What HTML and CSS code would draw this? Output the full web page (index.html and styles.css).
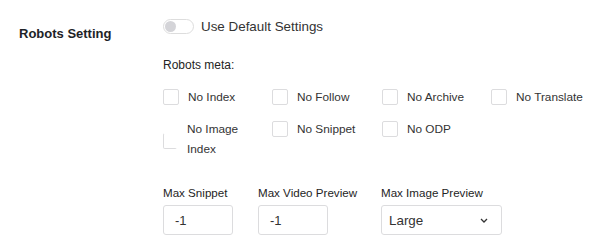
FILE: index.html
```html
<!DOCTYPE html>
<html>
<head>
<meta charset="utf-8">
<link rel="stylesheet" href="styles.css">
</head>
<body>
<div class="setting-row">
  <div class="setting-label">Robots Setting</div>
  <div class="setting-body">
    <div class="toggle-row">
      <span class="toggle"><span class="knob"></span></span>
      <span class="toggle-text">Use Default Settings</span>
    </div>
    <div class="meta-title">Robots meta:</div>
    <div class="check-grid">
      <label class="check"><span class="box"></span><span class="check-text">No Index</span></label>
      <label class="check"><span class="box"></span><span class="check-text">No Follow</span></label>
      <label class="check"><span class="box"></span><span class="check-text">No Archive</span></label>
      <label class="check"><span class="box"></span><span class="check-text">No Translate</span></label>
      <label class="check tall"><span class="box squished"></span><span class="check-text">No Image Index</span></label>
      <label class="check"><span class="box"></span><span class="check-text">No Snippet</span></label>
      <label class="check"><span class="box"></span><span class="check-text">No ODP</span></label>
    </div>
    <div class="fields">
      <div class="field f1">
        <div class="field-label">Max Snippet</div>
        <div class="input small">-1</div>
      </div>
      <div class="field f2">
        <div class="field-label">Max Video Preview</div>
        <div class="input small">-1</div>
      </div>
      <div class="field">
        <div class="field-label">Max Image Preview</div>
        <div class="input select">Large
          <svg class="chev" width="8" height="5" viewBox="0 0 8 5"><path d="M1 1 L4 4 L7 1" fill="none" stroke="#333" stroke-width="1.3"/></svg>
        </div>
      </div>
    </div>
  </div>
</div>
</body>
</html>
```
FILE: styles.css
```css
html, body {
  margin: 0;
  padding: 0;
  background: #fff;
}
body {
  font-family: "Liberation Sans", Arial, sans-serif;
  color: #242424;
}
.setting-row {
  display: flex;
  padding-top: 18px;
}
.setting-label {
  width: 144px;
  padding-left: 19px;
  padding-top: 6px;
  font-size: 13px;
  font-weight: 700;
  color: #1d2327;
  line-height: 20px;
}
.setting-body {
  display: flex;
  flex-direction: column;
}
.toggle-row {
  display: flex;
  align-items: center;
  gap: 7px;
  height: 17px;
}
.toggle {
  width: 27px;
  height: 13px;
  border: 1px solid #ddd;
  border-radius: 8px;
  background: #fff;
  display: flex;
  align-items: center;
  padding: 0 1px;
}
.knob {
  width: 11px;
  height: 11px;
  border-radius: 50%;
  background: #d4d4d8;
}
.toggle-text {
  font-size: 13.4px;
  color: #333;
}
.meta-title {
  margin-top: 22px;
  font-size: 12px;
  line-height: 16px;
  color: #242424;
}
.check-grid {
  margin-top: 14px;
  display: grid;
  grid-template-columns: 109px 110px 109px 109px;
  row-gap: 12px;
  align-items: start;
}
.check {
  display: flex;
  align-items: center;
  gap: 9px;
  font-size: 11.8px;
  line-height: 20px;
  color: #333;
}
.check .check-text {
  max-width: 78px;
}
.check:nth-child(4) .check-text {
  max-width: none;
  white-space: nowrap;
}
.box {
  flex: none;
  width: 14px;
  height: 14px;
  border: 1px solid #dcdcde;
  border-radius: 2px;
  background: #fff;
}
.box.squished {
  width: 12px;
  border-top-color: transparent;
  border-right-color: transparent;
  margin-top: 4px;
  margin-right: 1px;
}
.fields {
  margin-top: 26px;
  display: flex;
}
.field {
  display: flex;
  flex-direction: column;
  gap: 4px;
}
.field.f1 {
  width: 95px;
}
.field.f2 {
  width: 123px;
}
.field-label {
  font-size: 11.6px;
  line-height: 16px;
  color: #242424;
  white-space: nowrap;
}
.input {
  border: 1px solid #dcdcde;
  border-radius: 3px;
  box-sizing: border-box;
  height: 30px;
  display: flex;
  align-items: center;
  font-size: 13px;
  color: #333;
  background: #fff;
}
.input.small {
  width: 70px;
  padding-left: 11px;
}
.input.select {
  width: 121px;
  padding-left: 7px;
  padding-right: 13px;
  justify-content: space-between;
  font-size: 13.4px;
}
.chev {
  display: block;
}
```
